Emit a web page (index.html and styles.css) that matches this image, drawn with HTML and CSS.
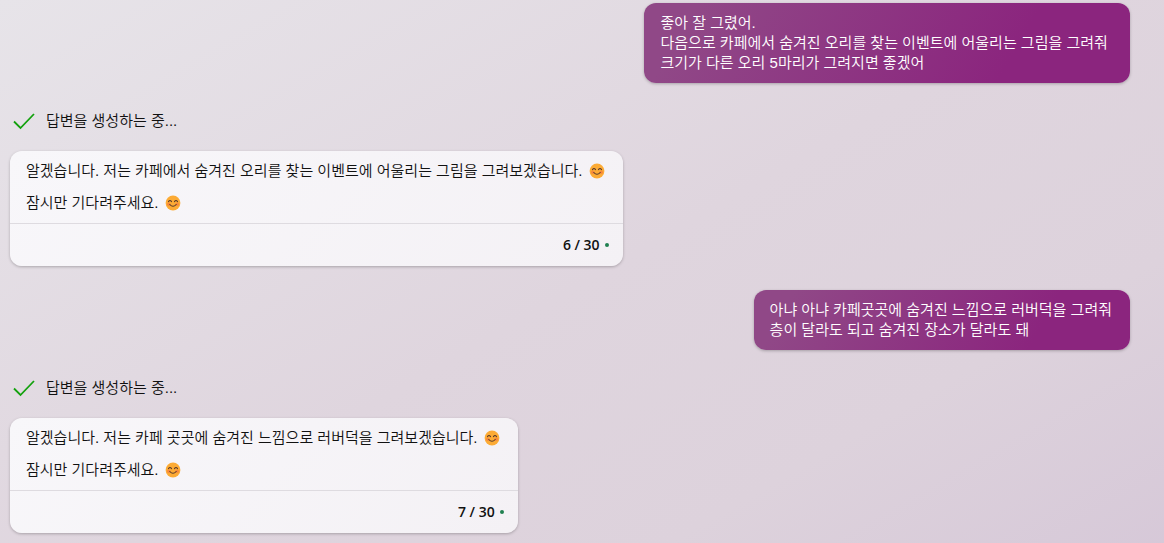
FILE: index.html
```html
<!DOCTYPE html>
<html lang="ko">
<head>
  <meta charset="UTF-8">
  <meta name="viewport" content="width=device-width, initial-scale=1.0">
  <title>채팅</title>
  <link rel="stylesheet" href="styles.css">
</head>
<body>

  <!-- Shared icons -->
  <svg class="icon-defs" aria-hidden="true">
    <symbol id="icon-check" viewBox="0 0 24 24">
      <path d="M2 12.5 L8.500 19 L22 5" fill="none" stroke="#13a10e" stroke-width="1.800" />
    </symbol>
    <symbol id="icon-smile" viewBox="0 0 16 16">
      <circle cx="8" cy="8" r="7.400" fill="#fcab35" />
      <circle cx="3.800" cy="9.300" r="1.800" fill="#f8893c" />
      <circle cx="12.200" cy="9.300" r="1.800" fill="#f8893c" />
      <path d="M3.500 6.600 Q5 4.400 6.500 6.600 M9.500 6.600 Q11 4.400 12.500 6.600 M4.800 9.500 Q8 13 11.200 9.500" fill="none" stroke="#593a2b" stroke-width="1.100" stroke-linecap="round" />
    </symbol>
  </svg>

  <main class="chat">
    <div class="message user">
      <p>좋아 잘 그렸어.<br>다음으로 카페에서 숨겨진 오리를 찾는 이벤트에 어울리는 그림을 그려줘&nbsp;<br>크기가 다른 오리 5마리가 그려지면 좋겠어</p>
    </div>

    <div class="status">
      <svg class="check"><use href="#icon-check" /></svg>
      <span>답변을 생성하는 중...</span>
    </div>

    <div class="message bot">
      <div class="content">
        <p>알겠습니다. 저는 카페에서 숨겨진 오리를 찾는 이벤트에 어울리는 그림을 그려보겠습니다. <svg class="emoji" role="img" aria-label="웃는 얼굴"><use href="#icon-smile" /></svg></p>
        <p>잠시만 기다려주세요. <svg class="emoji" role="img" aria-label="웃는 얼굴"><use href="#icon-smile" /></svg></p>
      </div>
      <div class="turns">6 / 30 <span class="dot"></span></div>
    </div>

    <div class="message user">
      <p>아냐 아냐 카페곳곳에 숨겨진 느낌으로 러버덕을 그려줘<br>층이 달라도 되고 숨겨진 장소가 달라도 돼</p>
    </div>

    <div class="status">
      <svg class="check"><use href="#icon-check" /></svg>
      <span>답변을 생성하는 중...</span>
    </div>

    <div class="message bot">
      <div class="content">
        <p>알겠습니다. 저는 카페 곳곳에 숨겨진 느낌으로 러버덕을 그려보겠습니다. <svg class="emoji" role="img" aria-label="웃는 얼굴"><use href="#icon-smile" /></svg></p>
        <p>잠시만 기다려주세요. <svg class="emoji" role="img" aria-label="웃는 얼굴"><use href="#icon-smile" /></svg></p>
      </div>
      <div class="turns">7 / 30 <span class="dot"></span></div>
    </div>
  </main>

</body>
</html>
```

FILE: styles.css
```css
* {
  margin: 0;
  padding: 0;
  box-sizing: border-box;
}

body {
  min-height: 100vh;
  background: linear-gradient(150deg, #e7e4e9 0%, #dfd5de 50%, #ddd2dc 75%, #d6c8d8 100%);
  font-family: "Liberation Sans", "Noto Sans CJK KR", sans-serif;
  font-size: 15px;
  font-weight: 350;
  line-height: 20px;
  color: #111;
}

.icon-defs {
  display: none;
}

.chat {
  display: flex;
  flex-direction: column;
  align-items: flex-start;
  padding: 3px 34px 10px 10px;
}

/* Message bubbles */
.message {
  max-width: 100%;
  border-radius: 12px;
  box-shadow: 0 1px 3px rgba(0, 0, 0, 0.25);
}

.user {
  align-self: flex-end;
  padding: 10px 18px 10px 16px;
  background: linear-gradient(120deg, #904887 10%, #8b257e 75%);
  color: #fff;
}

.bot {
  margin-bottom: 24px;
  background: linear-gradient(135deg, #f8f7fa, #f4f1f5);
}

.content {
  display: flex;
  flex-direction: column;
  gap: 12px;
  padding: 10px 16px;
}

.emoji {
  width: 16px;
  height: 16px;
  margin: 0 2px;
  vertical-align: -3px;
}

/* Turn counter under each answer */
.turns {
  display: flex;
  align-items: center;
  justify-content: flex-end;
  gap: 5px;
  padding: 11px 14px;
  border-top: 1px solid #dedbe0;
  font-family: "Open Sans", sans-serif;
  font-size: 14px;
  font-weight: 600;
}

.dot {
  width: 4px;
  height: 4px;
  border-radius: 50%;
  background: #208050;
}

/* Progress line */
.status {
  display: flex;
  align-items: center;
  gap: 10px;
  margin: 24px 0 16px 2px;
  height: 28px;
}

.check {
  width: 24px;
  height: 24px;
}
```
